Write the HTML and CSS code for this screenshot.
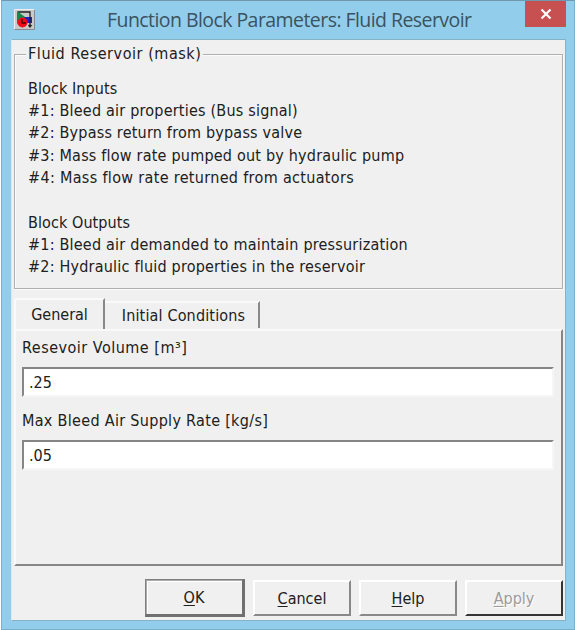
FILE: index.html
```html
<!DOCTYPE html>
<html lang="en">
<head>
<meta charset="utf-8">
<title>Function Block Parameters: Fluid Reservoir</title>
<link rel="stylesheet" href="styles.css">
</head>
<body>
<main class="window">
  <header class="titlebar">
    <svg class="app-icon" viewBox="0 0 21 21">
      <path fill="#c9c9c9" d="M0 0h21v21H0z"/>
      <path fill="none" stroke="#eee" d="M.5 20V.5H20"/>
      <path fill="none" stroke="#858b8e" d="M.5 20.500h20V1"/>
      <path fill="#2020c8" d="M10 8h8v6h-8z"/>
      <path fill="none" stroke="#222" stroke-width="1.300" d="M4 3h12v14M14.500 16l1.500 2 1.500-2"/>
      <path fill="#16864a" d="M3 2l8 6-8 7z"/>
      <circle cx="8.500" cy="13.500" r="5" fill="#f00c18"/>
      <path fill="none" stroke="#400" stroke-width="1.300" d="M8 10v4h4"/>
    </svg>
    <h1 class="title">Function Block Parameters: Fluid Reservoir</h1>
    <button class="close" aria-label="Close"><svg viewBox="0 0 12 12"><path d="M1.500 1.500l9 9M10.500 1.500l-9 9"/></svg></button>
  </header>
  <section class="client">
    <fieldset class="mask">
      <legend>Fluid Reservoir (mask)</legend>
      <p class="heading">Block Inputs</p>
      <p>#1: Bleed air properties (Bus signal)</p>
      <p>#2: Bypass return from bypass valve</p>
      <p>#3: Mass flow rate pumped out by hydraulic pump</p>
      <p class="wide">#4: Mass flow rate returned from actuators</p>
      <p class="heading gap">Block Outputs</p>
      <p>#1: Bleed air demanded to maintain pressurization</p>
      <p>#2: Hydraulic fluid properties in the reservoir</p>
    </fieldset>
    <nav class="tabs">
      <button class="tab active">General</button>
      <button class="tab">Initial Conditions</button>
    </nav>
    <section class="panel">
      <label class="volume">Resevoir Volume [m³]<input value=".25"></label>
      <label class="rate">Max Bleed Air Supply Rate [kg/s]<input value=".05"></label>
    </section>
    <footer class="actions">
      <button class="btn default"><span><u>O</u>K</span></button>
      <button class="btn"><span><u>C</u>ancel</span></button>
      <button class="btn"><span><u>H</u>elp</span></button>
      <button class="btn apply" disabled><span><u>A</u>pply</span></button>
    </footer>
  </section>
</main>
</body>
</html>
```

FILE: styles.css
```css
* { box-sizing: border-box; }
body { margin: 0; width: 575px; height: 630px; overflow: hidden; background: #fff; color: #202020; }
body, button, input { font-family: "DejaVu Sans Condensed", "DejaVu Sans", sans-serif; font-stretch: condensed; font-size: 16px; }
button { margin: 0; padding: 0; border: 0; background: none; color: inherit; }
.window { margin-left: 1px; width: 574px; height: 630px; padding: 0 8px 8px 9px; background: #92ceeb; border: 1px solid #7ab1ca; border-top-color: #7298ae; }
.titlebar { height: 38px; display: flex; align-items: flex-start; }
.app-icon { width: 21px; height: 21px; margin: 8px 0 0 3px; flex: none; }
.title { margin: 5px 0 0 72px; width: 364px; font: 400 19.5px/28px "Open Sans", sans-serif; font-stretch: 95%; letter-spacing: -.56px; white-space: nowrap; color: #3b5260; }
.close { width: 41px; height: 26px; margin-left: auto; background: #c75050; display: flex; align-items: center; justify-content: center; }
.close svg { width: 12px; height: 12px; fill: none; stroke: #fff; stroke-width: 2.2; }
.client { height: 582px; background: #f0f0f0; border: 1px solid #84b3c8; border-left-color: #d9eaf2; padding: 3px 2px 0 2px; }
.mask { margin: 0; height: 246px; padding: 0 0 0 13px; min-width: 0; border: 1px solid #b0b0b0; box-shadow: 1px 1px #fbfbfb, inset 1px 1px #fbfbfb; }
.mask legend { padding: 0 2px; margin-left: -2px; line-height: 22px; letter-spacing: .55px; background: #f0f0f0; white-space: nowrap; }
.mask p { margin: 0; line-height: 22.2px; white-space: nowrap; letter-spacing: .21px; }
.mask .heading { letter-spacing: .08px; }
.mask .wide { letter-spacing: .33px; }
.mask legend + p { margin-top: 13px; }
.mask .gap { margin-top: 22.6px; }
.tabs { display: flex; align-items: flex-end; height: 31px; margin-top: 9px; }
.tab { width: 155px; height: 27px; padding-left: 4px; border-top: 2px solid #fafafa; border-right: 2px solid #898989; margin-bottom: 1px; letter-spacing: .16px; }
.tab.active { width: 91px; height: 31px; padding-left: 0; border-left: 2px solid #fafafa; border-radius: 3px 0 0; margin-bottom: 0; letter-spacing: 0; }
.panel { height: 237px; border: 2px solid #fafafa; border-right-color: #868686; border-bottom-color: #868686; padding: 6px 7px 0 6px; }
.panel label { display: block; line-height: 22px; height: 73px; white-space: nowrap; }
.panel .volume { letter-spacing: .5px; }
.panel .rate { letter-spacing: .31px; }
.panel input { display: block; width: 100%; height: 30px; margin-top: 8px; padding: 0 5px; border: 2px solid #868686; border-right-color: #f6f6f6; border-bottom-color: #f6f6f6; background: #fff; color: #202020; }
.actions { display: flex; justify-content: flex-end; align-items: center; gap: 8px; margin-top: 13px; height: 38px; }
.btn { width: 98px; height: 36px; border: 2px solid #fff; border-right-color: #898989; border-bottom-color: #898989; }
.btn.default { width: 100px; height: 38px; border: 1px solid #808080; border-right: 3px solid #707070; border-bottom: 3px solid #707070; box-shadow: inset 1px 1px #aaa, inset 2px 2px #fff; }
.btn.apply { color: #9b9b9b; text-shadow: 1px 1px #fff; border-right-color: #353535; border-bottom-color: #353535; }
u { text-underline-offset: 2px; text-decoration-thickness: 1px; }
```
